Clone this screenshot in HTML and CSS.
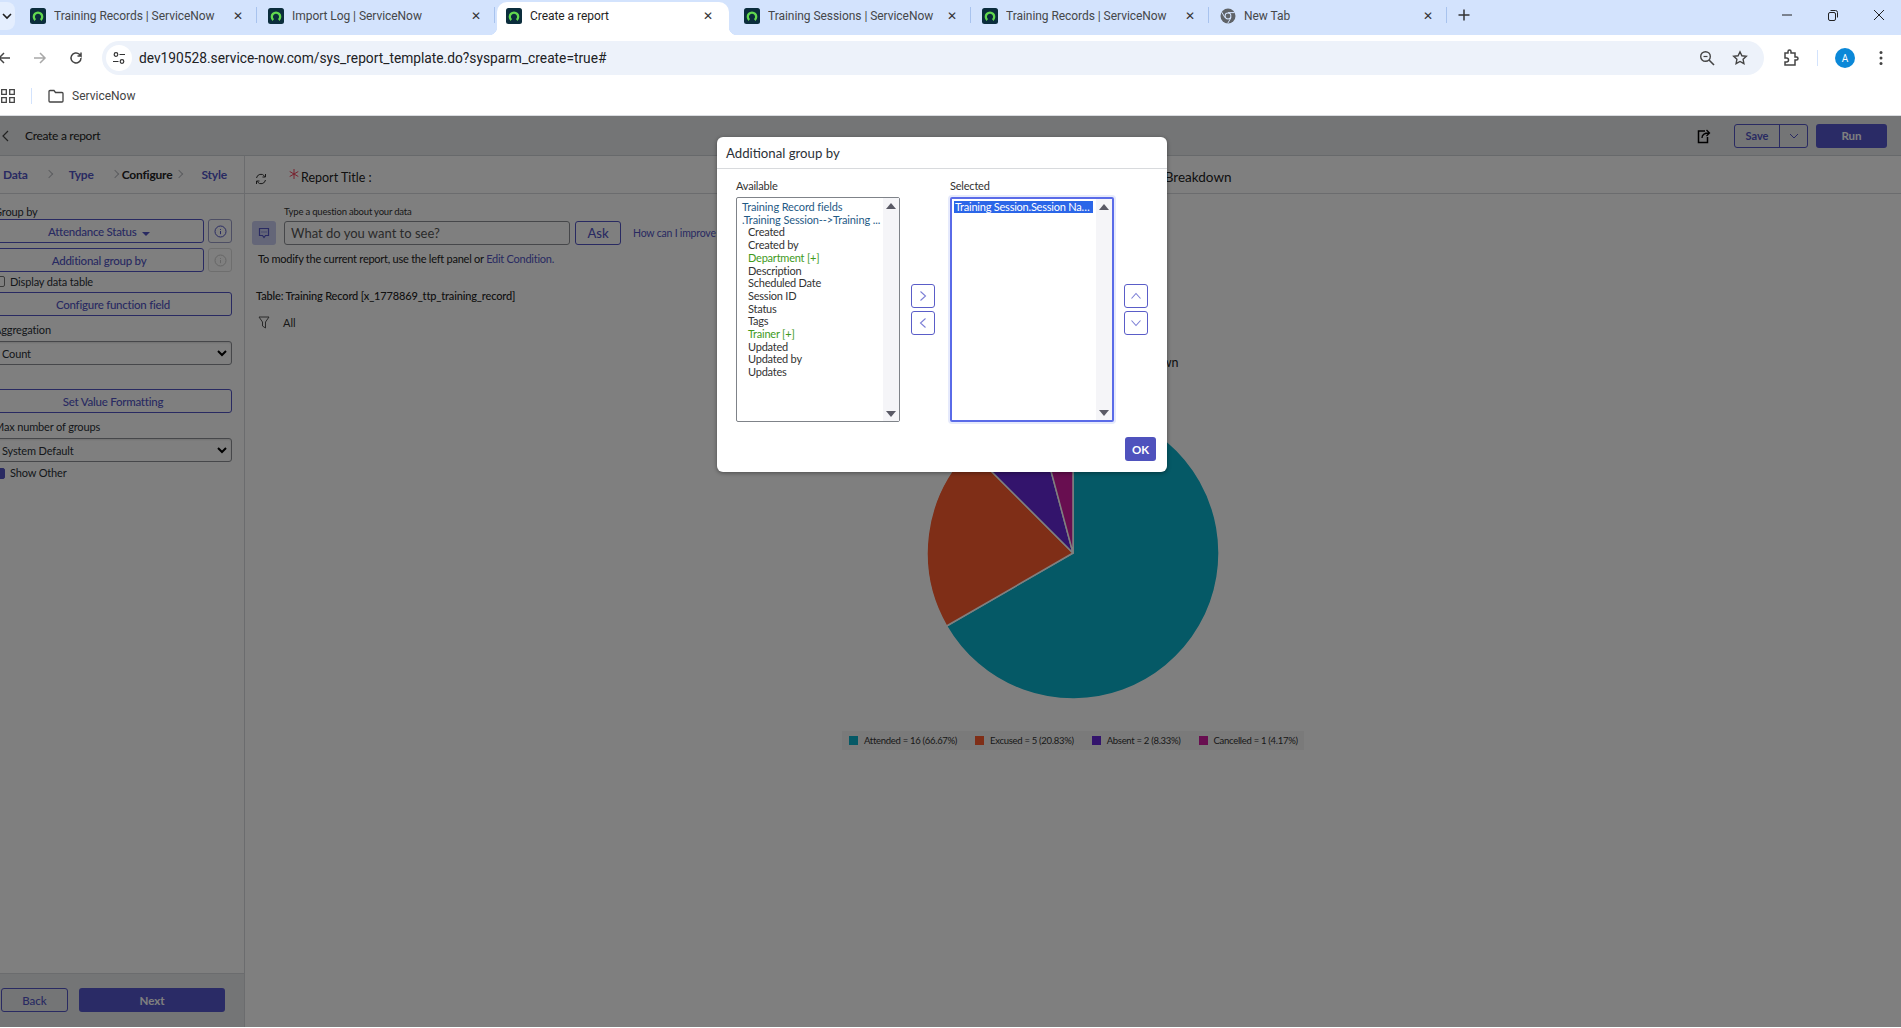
FILE: index.html

```html
<!DOCTYPE html>
<html lang="en">
<head>
    <meta charset="UTF-8">
    <title>Create a report | ServiceNow</title>
    <link rel="stylesheet" href="styles.css">
</head>
<body>
    <svg width="0" height="0" class="defs">
        <symbol id="sn" viewBox="0 0 16 16">
            <rect width="16" height="16" rx="2.500" fill="#0b2d3c"/>
            <path d="M5.300 12A4.200 4.200 0 1 1 10.700 12" fill="none" stroke="#62d84e" stroke-width="2.300"/>
        </symbol>
    </svg>

    <!-- browser chrome -->
    <div class="tabstrip">
        <div class="tab-search"><svg width="10" height="10" viewBox="0 0 10 10"><path d="M1 3l4 4 4-4" fill="none" stroke="#1f1f1f" stroke-width="1.600"/></svg></div>
        <div class="tab"><svg class="fav"><use href="#sn"/></svg><span class="tab-title">Training Records | ServiceNow</span><span class="tab-x">✕</span></div>
        <div class="tab"><svg class="fav"><use href="#sn"/></svg><span class="tab-title">Import Log | ServiceNow</span><span class="tab-x">✕</span></div>
        <div class="tab active"><svg class="fav"><use href="#sn"/></svg><span class="tab-title">Create a report</span><span class="tab-x">✕</span></div>
        <div class="tab"><svg class="fav"><use href="#sn"/></svg><span class="tab-title">Training Sessions | ServiceNow</span><span class="tab-x">✕</span></div>
        <div class="tab"><svg class="fav"><use href="#sn"/></svg><span class="tab-title">Training Records | ServiceNow</span><span class="tab-x">✕</span></div>
        <div class="tab last">
            <svg class="fav" viewBox="0 0 16 16"><circle cx="8" cy="8" r="7.500" fill="#5f6368"/><circle cx="8" cy="8" r="3.400" fill="#d3e3fd"/><circle cx="8" cy="8" r="2.400" fill="#5f6368"/><path d="M8 4.600h6.600M5 9.700L1.800 4.200M11 9.700l-3.300 5.700" stroke="#d3e3fd" stroke-width="1"/></svg>
            <span class="tab-title">New Tab</span><span class="tab-x">✕</span>
        </div>
        <div class="new-tab"><svg width="14" height="14" viewBox="0 0 14 14"><path d="M7 1.500v11M1.500 7h11" stroke="#333" stroke-width="1.500"/></svg></div>
        <div class="win-btns">
            <svg width="12" height="12" viewBox="0 0 12 12"><path d="M1 6h10" stroke="#222" stroke-width="1"/></svg>
            <svg width="12" height="12" viewBox="0 0 12 12"><rect x="1.500" y="3.500" width="7" height="8" rx="1.500" fill="none" stroke="#222"/><path d="M3.500 1.500h5a2 2 0 0 1 2 2v5" fill="none" stroke="#222"/></svg>
            <svg width="12" height="12" viewBox="0 0 12 12"><path d="M1 1l10 10M11 1L1 11" stroke="#222" stroke-width="1"/></svg>
        </div>
    </div>

    <div class="toolbar">
        <svg class="nav-arrow first" width="14" height="14" viewBox="0 0 14 14"><path d="M13 7H2M7 2L2 7l5 5" fill="none" stroke="#444" stroke-width="1.500"/></svg>
        <svg class="nav-arrow" width="14" height="14" viewBox="0 0 14 14"><path d="M1 7h11M7 2l5 5-5 5" fill="none" stroke="#a8a8a8" stroke-width="1.500"/></svg>
        <svg class="nav-arrow" width="14" height="14" viewBox="0 0 14 14"><path d="M12 7a5 5 0 1 1-1.600-3.700L12 5V1.500M12 5H8.500" fill="none" stroke="#444" stroke-width="1.500"/></svg>
        <div class="omnibox">
            <span class="site-btn"><svg width="14" height="14" viewBox="0 0 14 14"><circle cx="4" cy="3.500" r="1.800" fill="none" stroke="#333" stroke-width="1.200"/><path d="M7.500 3.500H13M1 10.500h5.500" stroke="#333" stroke-width="1.200"/><circle cx="10" cy="10.500" r="1.800" fill="none" stroke="#333" stroke-width="1.200"/></svg></span>
            <span class="url">dev190528.service-now.com/sys_report_template.do?sysparm_create=true#</span>
            <svg class="omni-icon" width="16" height="16" viewBox="0 0 16 16"><circle cx="6.500" cy="6.500" r="4.800" fill="none" stroke="#444" stroke-width="1.400"/><path d="M10 10l5 5" stroke="#444" stroke-width="1.600"/><path d="M4.500 6.500h4" stroke="#444" stroke-width="1.200"/></svg>
            <svg class="omni-icon star" width="16" height="16" viewBox="0 0 16 16"><path d="M8 1.800l1.900 4 4.400.5-3.200 3 .8 4.400L8 11.500l-3.900 2.200.8-4.400-3.200-3 4.400-.5z" fill="none" stroke="#444" stroke-width="1.400"/></svg>
        </div>
        <svg class="ext" width="18" height="18" viewBox="0 0 18 18"><path d="M4 4h3V2.500a1.500 1.500 0 0 1 3 0V4h4v4h1.500a1.500 1.500 0 0 1 0 3H14v5H4v-3h1.500a2 2 0 0 0 0-4H4z" fill="none" stroke="#444" stroke-width="1.500"/></svg>
        <span class="tool-sep"></span>
        <span class="avatar">A</span>
        <svg class="dots" width="4" height="16" viewBox="0 0 4 16"><circle cx="2" cy="2.500" r="1.500" fill="#444"/><circle cx="2" cy="8" r="1.500" fill="#444"/><circle cx="2" cy="13.500" r="1.500" fill="#444"/></svg>
    </div>

    <div class="bookmarks">
        <svg class="apps" width="14" height="14" viewBox="0 0 14 14"><path d="M.7.700h4.600v4.600H.7zM8.700.700h4.600v4.600H8.700zM.7 8.700h4.600v4.600H.7zM8.700 8.700h4.600v4.600H8.700z" fill="none" stroke="#444" stroke-width="1.300"/></svg>
        <span class="book-sep"></span>
        <svg class="folder" width="16" height="14" viewBox="0 0 16 14"><path d="M1 2.500a1 1 0 0 1 1-1h4l1.500 2H14a1 1 0 0 1 1 1V12a1 1 0 0 1-1 1H2a1 1 0 0 1-1-1z" fill="none" stroke="#444" stroke-width="1.300"/></svg>
        <span class="book-label">ServiceNow</span>
    </div>

    <!-- report designer page, dimmed by the modal backdrop -->
    <div class="page">
        <header class="page-head">
            <svg class="back-chev" width="7" height="12" viewBox="0 0 7 12"><path d="M6 1L1 6l5 5" fill="none" stroke="#444" stroke-width="1.200"/></svg>
            <span class="page-title">Create a report</span>
            <svg class="share" width="14" height="16" viewBox="0 0 14 16"><path d="M8 3H1.500v11.500h9V9" fill="none" stroke="#000" stroke-width="1.500"/><path d="M5 10c0-3.500 2-5 7-5M9.500 2l3 3-3 3" fill="none" stroke="#000" stroke-width="1.300"/></svg>
            <div class="save-group">
                <span class="save-main">Save</span>
                <span class="save-caret"><svg width="10" height="6" viewBox="0 0 10 6"><path d="M1 1l4 4 4-4" fill="none" stroke="#5255c4" stroke-width="1"/></svg></span>
            </div>
            <button class="btn-primary run">Run</button>
        </header>

        <div class="designer">
            <aside class="sidebar">
                <nav class="steps">
                    <a class="step step-data">Data</a><i class="chev"></i>
                    <a class="step step-type">Type</a><i class="chev"></i>
                    <a class="step current">Configure</a><i class="chev"></i>
                    <a class="step">Style</a>
                </nav>
                <div class="side-form">
                    <label class="side-label first">Group by</label>
                    <div class="btn-row">
                        <button class="btn-outline short">Attendance Status <span class="mini-caret"></span></button>
                        <span class="info-btn"><svg width="13" height="13" viewBox="0 0 13 13"><circle cx="6.500" cy="6.500" r="5.500" fill="none" stroke="#5255c4"/><path d="M6.500 4v.9M6.500 6v3.200" stroke="#5255c4"/></svg></span>
                    </div>
                    <div class="btn-row second">
                        <button class="btn-outline short">Additional group by</button>
                        <span class="info-btn off"><svg width="13" height="13" viewBox="0 0 13 13"><circle cx="6.500" cy="6.500" r="5.500" fill="none" stroke="#ccc"/><path d="M6.500 4v.9M6.500 6v3.200" stroke="#ccc"/></svg></span>
                    </div>
                    <div class="check-row display"><span class="check"></span>Display data table</div>
                    <button class="btn-outline wide">Configure function field</button>
                    <label class="side-label agg">Aggregation</label>
                    <div class="fake-select">Count<svg width="10" height="7" viewBox="0 0 10 7"><path d="M1 1l4 4 4-4" fill="none" stroke="#000" stroke-width="2"/></svg></div>
                    <button class="btn-outline wide format">Set Value Formatting</button>
                    <label class="side-label agg">Max number of groups</label>
                    <div class="fake-select">System Default<svg width="10" height="7" viewBox="0 0 10 7"><path d="M1 1l4 4 4-4" fill="none" stroke="#000" stroke-width="2"/></svg></div>
                    <div class="check-row other"><span class="check on"></span>Show Other</div>
                </div>
                <div class="side-foot">
                    <button class="btn-back">Back</button>
                    <button class="btn-primary next">Next</button>
                </div>
            </aside>

            <main class="canvas">
                <div class="title-row">
                    <svg class="refresh" width="12" height="12" viewBox="0 0 12 12"><path d="M1.500 5a4.500 4.500 0 0 1 8-2l1 1M10.500 7a4.500 4.500 0 0 1-8 2l-1-1M10.500 1v3h-3M1.500 11V8h3" fill="none" stroke="#333" stroke-width="1"/></svg>
                    <svg class="req" width="10" height="10" viewBox="0 0 10 10"><path d="M5 0v10M.7 2.500l8.600 5M9.300 2.500l-8.600 5" stroke="#f0405a" stroke-width="1"/></svg>
                    <span class="title-label">Report Title :</span>
                    <span class="title-value">Training Attendance Status Breakdown</span>
                </div>
                <div class="ask-block">
                    <div class="ask-hint">Type a question about your data</div>
                    <div class="ask-row">
                        <span class="ask-icon"><svg width="12" height="12" viewBox="0 0 12 12"><path d="M1.500 1.500h9v7h-3L6 10.500 4.500 8.500h-3z" fill="none" stroke="#5255c4" stroke-width="1.200"/><path d="M3.500 5h5" stroke="#5255c4" stroke-dasharray="1 1"/></svg></span>
                        <span class="ask-input">What do you want to see?</span>
                        <button class="btn-ask">Ask</button>
                        <a class="ask-help">How can I improve results?</a>
                    </div>
                    <p class="ask-note">To modify the current report, use the left panel or <a class="link">Edit Condition.</a></p>
                </div>
                <div class="table-name">Table: Training Record [x_1778869_ttp_training_record]</div>
                <div class="filter-row">
                    <svg width="12" height="13" viewBox="0 0 12 13"><path d="M1 1h10L7.500 6v6l-3-2V6z" fill="none" stroke="#555"/></svg>
                    <span>All</span>
                </div>
                <div class="chart">
                    <div class="chart-title">Training Attendance Status Breakdown</div>
                    <svg class="pie" width="294" height="294" viewBox="-147 -147 294 294">
                        <g stroke="#ffffff" stroke-width="1.500" stroke-linejoin="round">
                            <path d="M0 0V-146A146 146 0 1 1 -126.400 73Z" fill="#0bb2cc"/>
                            <path d="M0 0L-126.400 73A146 146 0 0 1 -103.200 -103.200Z" fill="#ff5c2e"/>
                            <path d="M0 0L-103.200 -103.200A146 146 0 0 1 -37.800 -141Z" fill="#6628d8"/>
                            <path d="M0 0L-37.800 -141A146 146 0 0 1 0 -146Z" fill="#d01ca0"/>
                        </g>
                    </svg>
                    <div class="legend">
                        <span class="leg-item"><i class="swatch teal"></i>Attended = 16 (66.67%)</span>
                        <span class="leg-item"><i class="swatch rust"></i>Excused = 5 (20.83%)</span>
                        <span class="leg-item"><i class="swatch violet"></i>Absent = 2 (8.33%)</span>
                        <span class="leg-item"><i class="swatch pink"></i>Cancelled = 1 (4.17%)</span>
                    </div>
                </div>
            </main>
        </div>

        <div class="backdrop"></div>

        <div class="modal">
            <div class="modal-head">Additional group by</div>
            <div class="modal-body">
                <div class="slush">
                    <div class="slush-label">Available</div>
                    <div class="listbox">
                        <ul class="options">
                            <li class="tree">Training Record fields</li>
                            <li class="tree">.Training Session--&gt;Training ...</li>
                            <li class="leaf">Created</li>
                            <li class="leaf">Created by</li>
                            <li class="leaf ref">Department [+]</li>
                            <li class="leaf">Description</li>
                            <li class="leaf">Scheduled Date</li>
                            <li class="leaf">Session ID</li>
                            <li class="leaf">Status</li>
                            <li class="leaf">Tags</li>
                            <li class="leaf ref">Trainer [+]</li>
                            <li class="leaf">Updated</li>
                            <li class="leaf">Updated by</li>
                            <li class="leaf">Updates</li>
                        </ul>
                        <div class="vbar"><i class="tri up"></i><i class="tri down"></i></div>
                    </div>
                </div>
                <div class="move-btns">
                    <span class="move"><svg width="8" height="12" viewBox="0 0 8 12"><path d="M1.500 1.500L6.500 6l-5 4.500" fill="none" stroke="#7c7fd6" stroke-width="1.100"/></svg></span>
                    <span class="move"><svg width="8" height="12" viewBox="0 0 8 12"><path d="M6.500 1.500L1.500 6l5 4.500" fill="none" stroke="#7c7fd6" stroke-width="1.100"/></svg></span>
                </div>
                <div class="slush">
                    <div class="slush-label">Selected</div>
                    <div class="listbox focused">
                        <ul class="options">
                            <li class="picked">Training Session.Session Name</li>
                        </ul>
                        <div class="vbar"><i class="tri up"></i><i class="tri down"></i></div>
                    </div>
                </div>
                <div class="move-btns order">
                    <span class="move"><svg width="12" height="8" viewBox="0 0 12 8"><path d="M1.500 6.500L6 1.500l4.500 5" fill="none" stroke="#7c7fd6" stroke-width="1.100"/></svg></span>
                    <span class="move"><svg width="12" height="8" viewBox="0 0 12 8"><path d="M1.500 1.500L6 6.500l4.500-5" fill="none" stroke="#7c7fd6" stroke-width="1.100"/></svg></span>
                </div>
            </div>
            <div class="modal-foot"><button class="btn-ok">OK</button></div>
        </div>
    </div>
</body>
</html>
```

FILE: styles.css

```css
* {
    margin: 0;
    padding: 0;
    box-sizing: border-box;
}

html, body {
    width: 1901px;
    height: 1028px;
    overflow: hidden;
    background: #fff;
}

body {
    font-family: 'Lato', sans-serif;
    color: #1f2a33;
}

button {
    font-family: inherit;
    cursor: pointer;
}

.defs {
    position: absolute;
}

/* ---- browser chrome ---- */
.tabstrip {
    height: 35px;
    background: #d3e3fd;
    display: flex;
    font-family: 'Roboto', sans-serif;
    font-size: 12px;
    letter-spacing: -0.05px;
    color: #45474a;
}

.tab-search {
    width: 15px;
    height: 28px;
    margin: 2px 4px 0 0;
    background: #e4eefe;
    border-radius: 0 8px 8px 0;
    display: flex;
    align-items: center;
    justify-content: flex-end;
    padding-right: 3px;
}

.tab {
    width: 238px;
    display: flex;
    align-items: center;
    padding: 0 13px 4px 11px;
    position: relative;
}

.tab::after {
    content: '';
    position: absolute;
    right: 0;
    top: 7px;
    height: 16px;
    width: 1px;
    background: #a8c3ee;
}

.tab.active {
    width: 232.500px;
    margin: 2px 4px 0 1.500px;
    padding: 0 15px 6px 9.500px;
    background: #fff;
    border-radius: 10px 10px 0 0;
    color: #1f1f1f;
}

/* the little flares at the foot of the active tab */
.tab.active::before,
.tab.active::after {
    content: '';
    position: absolute;
    top: auto;
    bottom: 0;
    width: 8px;
    height: 8px;
    background: radial-gradient(circle at 0 0, transparent 8px, #fff 8.500px);
}

.tab.active::before {
    left: -8px;
}

.tab.active::after {
    right: -8px;
    background: radial-gradient(circle at 100% 0, transparent 8px, #fff 8.500px);
}

.fav {
    width: 16px;
    height: 16px;
    flex: none;
    margin-right: 8px;
}

.tab-title {
    flex: 1;
    white-space: nowrap;
    overflow: hidden;
}

.tab-x {
    font-size: 12px;
    width: 12px;
    text-align: center;
    color: #333;
}

.new-tab {
    width: 36px;
    padding: 8px 0 0 10px;
}

.win-btns {
    margin-left: auto;
    display: flex;
    gap: 34px;
    padding: 9px 16px 0 0;
}

.toolbar {
    height: 46px;
    display: flex;
    align-items: center;
    position: relative;
}

.nav-arrow {
    margin-left: 22px;
}

.nav-arrow.first {
    margin-left: -3px;
}

.omnibox {
    margin-left: 19px;
    width: 1662px;
    height: 34px;
    background: #edf2fa;
    border-radius: 17px;
    display: flex;
    align-items: center;
    padding-left: 4px;
}

.site-btn {
    width: 26px;
    height: 26px;
    background: #fff;
    border-radius: 50%;
    display: flex;
    align-items: center;
    justify-content: center;
}

.url {
    margin-left: 7px;
    font-family: 'Roboto', sans-serif;
    font-size: 13.750px;
    color: #202124;
    flex: 1;
}

.omni-icon {
    margin-right: 17px;
}

.omni-icon.star {
    margin-right: 16px;
}

.ext {
    margin-left: 17px;
}

.tool-sep {
    width: 1px;
    height: 16px;
    background: #d3e3fd;
    margin-left: 18px;
}

.avatar {
    width: 20px;
    height: 20px;
    margin-left: 17px;
    border-radius: 50%;
    background: #0b88d8;
    color: #fff;
    font: 10px 'Roboto', sans-serif;
    display: flex;
    align-items: center;
    justify-content: center;
}

.dots {
    margin-left: 24px;
}

.bookmarks {
    height: 35px;
    display: flex;
    align-items: center;
    padding-bottom: 4px;
    font-family: 'Roboto', sans-serif;
    font-size: 12px;
    color: #444;
    border-bottom: 1px solid #dadce0;
}

.apps {
    margin-left: 1px;
}

.book-sep {
    width: 1px;
    height: 16px;
    background: #d3e3fd;
    margin-left: 16px;
}

.folder {
    margin-left: 16px;
}

.book-label {
    margin-left: 8px;
}

/* ---- page ---- */
.page {
    position: relative;
    height: 911px;
    display: flex;
    flex-direction: column;
}

.page-head {
    height: 40px;
    flex: none;
    background: #e8eaec;
    border-bottom: 1px solid #cfd2d6;
    display: flex;
    align-items: center;
    padding-right: 14px;
}

.back-chev {
    margin-left: 2px;
}

.page-title {
    margin-left: 16px;
    font-size: 12px;
    letter-spacing: -0.3px;
    color: #222;
}

.share {
    margin-left: auto;
}

.save-group {
    display: flex;
    width: 74px;
    height: 24px;
    margin-left: 23px;
    border: 1px solid #5255c4;
    border-radius: 3px;
    font-size: 11px;
    font-weight: 700;
    color: #5255c4;
}

.save-main {
    width: 45px;
    border-right: 1px solid #5255c4;
    text-align: center;
    line-height: 22px;
}

.save-caret {
    flex: 1;
    display: flex;
    align-items: center;
    justify-content: center;
}

.btn-primary {
    border: none;
    border-radius: 3px;
    background: #5456cc;
    color: #fff;
    font-size: 11.500px;
    font-weight: 700;
    height: 24px;
}

.run {
    width: 71px;
    margin-left: 8px;
}

.designer {
    flex: 1;
    display: flex;
    min-height: 0;
}

.sidebar {
    width: 245px;
    flex: none;
    border-right: 1px solid #d7d9dc;
    display: flex;
    flex-direction: column;
    overflow: hidden;
}

.steps {
    height: 38px;
    flex: none;
    display: flex;
    align-items: center;
    padding: 0 0 1px 3px;
    border-bottom: 1px solid #d7d9dc;
    font-size: 12px;
    font-weight: 700;
    letter-spacing: -0.2px;
    color: #5255c4;
}

.step.current {
    color: #222;
}

.chev {
    width: 6px;
    height: 6px;
    border-top: 1px solid #b9bbc0;
    border-right: 1px solid #b9bbc0;
    transform: rotate(45deg);
    margin: 0 17px 0 18px;
}

.step-type + .chev {
    margin: 0 4px 0 18px;
}

.step.current + .chev {
    margin: 0 19px 0 4px;
}

.side-form {
    flex: 1;
    margin-left: -6px;
    width: 238px;
    font-size: 11px;
    letter-spacing: -0.15px;
    color: #2a2f36;
}

.side-label {
    display: block;
    height: 14px;
    line-height: 14px;
}

.side-label.first {
    margin-top: 11px;
}

.side-label.agg {
    margin-top: 7px;
    margin-bottom: 4px;
}

.btn-row {
    display: flex;
    gap: 4px;
}

.btn-row.second {
    margin-top: 5px;
}

.btn-outline {
    height: 24px;
    background: #fff;
    border: 1px solid #5255c4;
    border-radius: 3px;
    color: #5255c4;
    font-size: 11.500px;
    font-weight: 500;
    letter-spacing: -0.25px;
}

.btn-outline.short {
    width: 211px;
}

.btn-outline.wide {
    width: 238px;
    display: block;
}

.btn-outline.format {
    margin-top: 24px;
}

.mini-caret {
    display: inline-block;
    margin-left: 3px;
    vertical-align: 0;
    border-left: 4px solid transparent;
    border-right: 4px solid transparent;
    border-top: 4px solid #5255c4;
}

.info-btn {
    width: 24px;
    height: 24px;
    border: 1px solid #9b9dc8;
    border-radius: 3px;
    display: flex;
    align-items: center;
    justify-content: center;
}

.info-btn.off {
    border-color: #ddd;
}

.check-row {
    display: flex;
    align-items: center;
    gap: 5px;
    height: 21px;
}

.check-row.display {
    height: 20px;
    padding-bottom: 2px;
}

.check {
    width: 11px;
    height: 11px;
    border: 1px solid #777;
    border-radius: 2px;
    background: #fff;
    margin-top: 1px;
}

.check.on {
    background: #5255c4;
    border-color: #5255c4;
}

.fake-select {
    width: 238px;
    height: 24px;
    border: 1px solid #8c8f94;
    border-radius: 3px;
    background: #fff;
    display: flex;
    align-items: center;
    justify-content: space-between;
    padding: 0 4px 0 7px;
    box-shadow: inset 0 1px 2px rgba(0, 0, 0, 0.12);
}

.side-foot {
    height: 54px;
    flex: none;
    background: #e8eaec;
    border-top: 1px solid #d7d9dc;
    display: flex;
    align-items: flex-start;
    padding: 14px 0 0 1px;
    gap: 11px;
}

.btn-back {
    width: 67px;
    height: 24px;
    background: transparent;
    border: 1px solid #5255c4;
    border-radius: 3px;
    color: #5255c4;
    font-size: 11.500px;
    font-weight: 500;
}

.next {
    width: 146px;
}

.canvas {
    flex: 1;
    min-width: 0;
    display: flex;
    flex-direction: column;
}

.title-row {
    height: 38px;
    flex: none;
    display: flex;
    align-items: center;
    padding: 5px 0 0 10px;
    border-bottom: 1px solid #d7d9dc;
    font-size: 13px;
}

.refresh {
    margin-top: 4px;
}

.req {
    margin: -6px 0 0 22px;
}

.title-label {
    margin-left: 2px;
    color: #222;
    font-size: 12.500px;
}

.title-value {
    margin-left: 632px;
    margin-top: -1px;
    font-size: 13.500px;
    color: #222;
    white-space: nowrap;
}

.ask-block {
    padding: 12px 0 0 7px;
    height: 76px;
    flex: none;
}

.ask-hint {
    margin-left: 32px;
    font-size: 9.500px;
    height: 14px;
    line-height: 11px;
    letter-spacing: -0.2px;
    color: #333;
}

.ask-row {
    display: flex;
    align-items: center;
    height: 25px;
}

.ask-icon {
    width: 24px;
    height: 24px;
    margin-top: 1px;
    background: #c9cdf0;
    border-radius: 3px;
    display: flex;
    align-items: center;
    justify-content: center;
    margin-right: 8px;
}

.ask-input {
    width: 286px;
    height: 24px;
    border: 1px solid #8c8f94;
    border-radius: 3px;
    background: #fff;
    padding-left: 6px;
    line-height: 22px;
    font-size: 13px;
    color: #555;
}

.btn-ask {
    width: 46px;
    height: 24px;
    margin-left: 5px;
    background: #fff;
    border: 1px solid #5255c4;
    border-radius: 3px;
    color: #5255c4;
    font-size: 13px;
    font-weight: 500;
}

/* runs on under the dialog, so stop it before the dialog's own text */
.ask-help {
    margin-left: 12px;
    width: 94px;
    overflow: hidden;
    font-size: 10.500px;
    letter-spacing: -0.2px;
    color: #5255c4;
    white-space: nowrap;
}

.ask-note {
    margin-top: 7px;
    font-size: 11px;
    line-height: 14px;
    letter-spacing: -0.25px;
    color: #222;
    margin-left: 6px;
}

.link {
    color: #5255c4;
}

.table-name {
    margin: 19px 0 0 11px;
    font-size: 11px;
    font-weight: 500;
    line-height: 14px;
    letter-spacing: -0.15px;
    color: #222;
}

.filter-row {
    margin: 13px 0 0 13px;
    display: flex;
    gap: 13px;
    align-items: flex-start;
    font-size: 11px;
    color: #333;
}

.chart {
    display: flex;
    flex-direction: column;
    align-items: center;
}

.chart-title {
    margin-top: 26px;
    font-size: 12.500px;
    line-height: 16px;
    color: #222;
}

.pie {
    margin-top: 35px;
}

.legend {
    margin-top: 31px;
    height: 19px;
    width: 462px;
    background: #f5f5f5;
    display: flex;
    align-items: center;
    padding-left: 7px;
    font-size: 9.500px;
    letter-spacing: -0.3px;
    color: #333;
}

.leg-item {
    display: flex;
    align-items: center;
    margin-right: 18px;
    white-space: nowrap;
}

.swatch {
    width: 9px;
    height: 9px;
    margin-right: 6px;
}

.teal { background: #0bb2cc; }
.rust { background: #ff5c2e; }
.violet { background: #6628d8; }
.pink { background: #d01ca0; }

/* ---- modal ---- */
.backdrop {
    position: absolute;
    inset: 0;
    background: rgba(0, 0, 0, 0.5);
}

.modal {
    position: absolute;
    left: 717px;
    top: 21px;
    width: 450px;
    height: 335px;
    background: #fff;
    border-radius: 6px;
    box-shadow: 0 1px 4px rgba(0, 0, 0, 0.4);
    display: flex;
    flex-direction: column;
}

.modal-head {
    height: 32px;
    flex: none;
    padding-left: 9px;
    line-height: 33px;
    font-size: 13.200px;
    color: #2c3138;
    border-bottom: 1px solid #d8dadd;
}

.modal-body {
    flex: 1;
    display: flex;
    padding: 10px 0 0 19px;
}

.slush {
    width: 164px;
}

.slush-label {
    height: 18px;
    font-size: 11px;
    line-height: 14px;
    letter-spacing: -0.2px;
    color: #333;
}

.listbox {
    height: 225px;
    border: 1px solid #7f8389;
    border-radius: 2px;
    display: flex;
}

.listbox.focused {
    border: 2px solid #5a6be8;
    box-shadow: 0 0 0 2px #e6eafc;
}

.options {
    flex: 1;
    list-style: none;
    padding: 3px 0 0 5px;
    font-size: 11px;
    line-height: 12.700px;
    letter-spacing: -0.22px;
    color: #333;
    min-width: 0;
    white-space: nowrap;
}

.listbox.focused .options {
    padding: 2px 3px 0 2px;
}

.tree {
    color: #1f5a86;
    letter-spacing: -0.12px;
}

.leaf {
    padding-left: 6px;
}

.ref {
    color: #3f9a1c;
}

.picked {
    background: #2b66e8;
    color: #fff;
    height: 12px;
    line-height: 12px;
    padding-left: 1px;
    overflow: hidden;
    text-overflow: ellipsis;
}

.vbar {
    width: 16px;
    flex: none;
    background: #f5f5f8;
    display: flex;
    flex-direction: column;
    justify-content: space-between;
    align-items: center;
    padding: 5px 0 4px;
}

.tri {
    border-left: 5px solid transparent;
    border-right: 5px solid transparent;
}

.tri.up {
    border-bottom: 6.500px solid #5a5a66;
}

.tri.down {
    border-top: 6.500px solid #5a5a66;
}

.move-btns {
    width: 50px;
    display: flex;
    flex-direction: column;
    align-items: center;
    gap: 3px;
    padding: 105px 4px 0 0;
}

.move-btns.order {
    padding-right: 6px;
}

.move {
    width: 24px;
    height: 24px;
    border: 1px solid #5a5dc8;
    border-radius: 3px;
    display: flex;
    align-items: center;
    justify-content: center;
}

.modal-foot {
    height: 35px;
    flex: none;
    display: flex;
    justify-content: flex-end;
    padding-right: 11px;
}

.btn-ok {
    width: 31px;
    height: 24px;
    border: none;
    border-radius: 3px;
    background: #4f52bd;
    color: #fff;
    font-size: 11.500px;
    font-weight: 700;
}
```
